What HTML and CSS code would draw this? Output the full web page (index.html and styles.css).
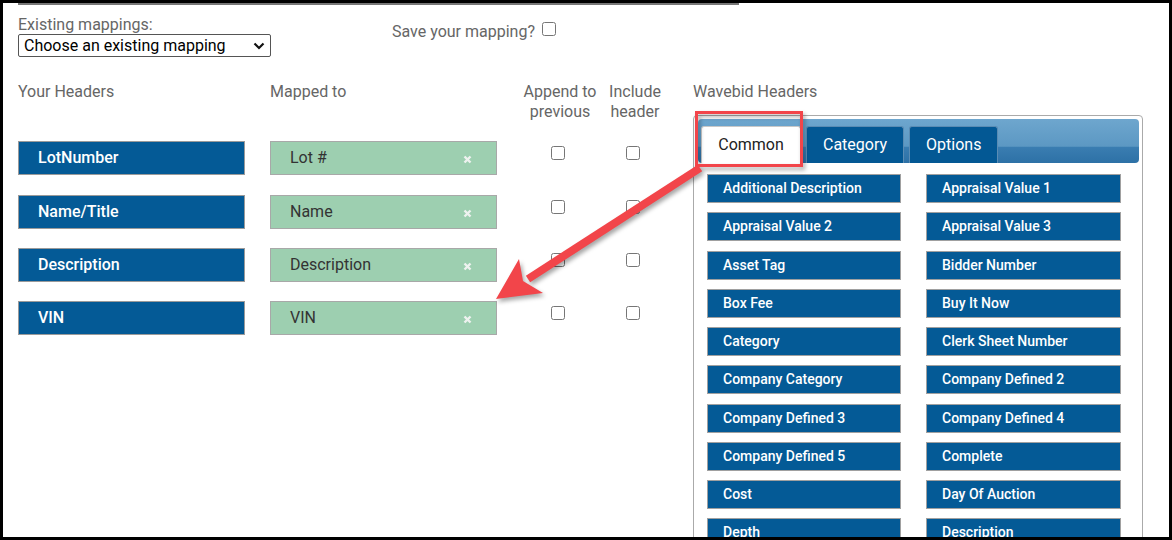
FILE: index.html
```html
<!DOCTYPE html>
<html>
<head>
  <title>Import Mapping</title>
  <meta name="viewport" content="width=device-width, initial-scale=1.0">
  <link rel="stylesheet" href="styles.css">
</head>
<body>
  <div class="frame">
    <div class="topline"></div>

    <div class="options">
      <div class="existing">
        <label for="mapping-select">Existing mappings:</label>
        <div class="select-wrap">
          <select id="mapping-select">
            <option>Choose an existing mapping</option>
          </select>
          <svg class="chevron" width="12" height="8" viewBox="0 0 12 8"><path d="M1.5 1.5 L6 6 L10.5 1.5" fill="none" stroke="#111" stroke-width="2.2"/></svg>
        </div>
      </div>
      <label class="save">Save your mapping? <input type="checkbox"></label>
    </div>

    <div class="workspace">
      <div class="mapper">
        <div class="col-title">Your Headers</div>
        <div class="col-title">Mapped to</div>
        <div class="col-title center">Append to<br>previous</div>
        <div class="col-title center">Include<br>header</div>

        <div class="yours">LotNumber</div>
        <div class="mapped">Lot # <svg class="remove" width="9" height="9" viewBox="0 0 9 9"><path d="M1.5 1.5 L7.5 7.5 M7.5 1.5 L1.5 7.5" stroke="#eef2ef" stroke-width="2.4"/></svg></div>
        <div class="check"><input type="checkbox"></div>
        <div class="check"><input type="checkbox"></div>

        <div class="yours">Name/Title</div>
        <div class="mapped">Name <svg class="remove" width="9" height="9" viewBox="0 0 9 9"><path d="M1.5 1.5 L7.5 7.5 M7.5 1.5 L1.5 7.5" stroke="#eef2ef" stroke-width="2.4"/></svg></div>
        <div class="check"><input type="checkbox"></div>
        <div class="check"><input type="checkbox"></div>

        <div class="yours">Description</div>
        <div class="mapped">Description <svg class="remove" width="9" height="9" viewBox="0 0 9 9"><path d="M1.5 1.5 L7.5 7.5 M7.5 1.5 L1.5 7.5" stroke="#eef2ef" stroke-width="2.4"/></svg></div>
        <div class="check"><input type="checkbox"></div>
        <div class="check"><input type="checkbox"></div>

        <div class="yours">VIN</div>
        <div class="mapped">VIN <svg class="remove" width="9" height="9" viewBox="0 0 9 9"><path d="M1.5 1.5 L7.5 7.5 M7.5 1.5 L1.5 7.5" stroke="#eef2ef" stroke-width="2.4"/></svg></div>
        <div class="check"><input type="checkbox"></div>
        <div class="check"><input type="checkbox"></div>
      </div>

      <div class="wavebid">
        <div class="col-title">Wavebid Headers</div>
        <div class="panel">
          <ul class="tabs">
            <li class="tab active">Common</li>
            <li class="tab">Category</li>
            <li class="tab">Options</li>
          </ul>
          <div class="fields">
            <div class="field">Additional Description</div>
            <div class="field">Appraisal Value 1</div>
            <div class="field">Appraisal Value 2</div>
            <div class="field">Appraisal Value 3</div>
            <div class="field">Asset Tag</div>
            <div class="field">Bidder Number</div>
            <div class="field">Box Fee</div>
            <div class="field">Buy It Now</div>
            <div class="field">Category</div>
            <div class="field">Clerk Sheet Number</div>
            <div class="field">Company Category</div>
            <div class="field">Company Defined 2</div>
            <div class="field">Company Defined 3</div>
            <div class="field">Company Defined 4</div>
            <div class="field">Company Defined 5</div>
            <div class="field">Complete</div>
            <div class="field">Cost</div>
            <div class="field">Day Of Auction</div>
            <div class="field">Depth</div>
            <div class="field">Description</div>
          </div>
        </div>
      </div>
    </div>

    <!-- callout drawn over the screenshot -->
    <svg class="annotation" width="1172" height="540" viewBox="0 0 1172 540">
      <g class="callout">
        <rect x="696.5" y="112.5" width="105" height="53" fill="none" stroke="#f2454a" stroke-width="3"/>
        <line x1="700" y1="168" x2="528" y2="279" stroke="#f2454a" stroke-width="8"/>
        <polygon points="496,299 519,259 523,281 543,293" fill="#f2454a"/>
      </g>
    </svg>
  </div>
</body>
</html>
```

FILE: styles.css
```css
html, body {
  margin: 0;
  padding: 0;
  background: #fff;
}
body {
  font-family: Roboto, "Liberation Sans", sans-serif;
  font-size: 16px;
  color: #666;
}
.frame {
  position: relative;
  width: 1172px;
  height: 540px;
  box-sizing: border-box;
  border: 3px solid #000;
  overflow: hidden;
}
.topline {
  margin-left: 15px;
  width: 721px;
  height: 2px;
  background: #777;
}

/* existing mapping + save */
.options {
  display: flex;
  padding-left: 15px;
  margin-top: 10px;
}
.existing label {
  display: block;
  line-height: 19px;
}
.select-wrap {
  position: relative;
  width: 253px;
}
.select-wrap select {
  appearance: none;
  -webkit-appearance: none;
  width: 253px;
  height: 23px;
  margin: 0;
  padding: 0 0 0 5px;
  border: 1px solid #555;
  border-radius: 2px;
  background: #fff;
  font-family: Roboto, "Liberation Sans", sans-serif;
  font-size: 16px;
  color: #000;
}
.chevron {
  position: absolute;
  right: 6px;
  top: 8px;
}
.save {
  margin-left: 121px;
  margin-top: 7px;
  line-height: 19px;
  display: flex;
  align-items: flex-start;
  gap: 7px;
}
.save input {
  margin: 0;
  width: 14px;
  height: 14px;
}

/* columns */
.workspace {
  display: flex;
  align-items: flex-start;
  padding-left: 15px;
  margin-top: 25px;
}
.col-title {
  line-height: 20px;
}
.center {
  text-align: center;
}
.mapper {
  display: grid;
  grid-template-columns: 252px 250px 80px 70px;
  grid-template-rows: 40px repeat(4, 34px);
  row-gap: 19.33px;
}
.yours, .mapped {
  width: 227px;
  height: 34px;
  box-sizing: border-box;
  padding-left: 19px;
  line-height: 32px;
}
.yours {
  background: #045a96;
  border: 1px solid #9a9a9a;
  color: #fff;
  font-weight: 500;
}
.mapped {
  position: relative;
  background: #9dcfb0;
  border: 1px solid #a8a8a8;
  color: #333;
}
.remove {
  position: absolute;
  right: 24px;
  top: 13px;
}
.check {
  text-align: center;
}
.check input {
  margin: 5px 4px 0 0;
  width: 14px;
  height: 14px;
}

/* wavebid headers */
.wavebid {
  margin-left: 23px;
}
.panel {
  margin-top: 13px;
  width: 450px;
  height: 440px;
  box-sizing: border-box;
  border: 1px solid #aaa;
  border-radius: 4px;
  padding: 3px;
}
.tabs {
  list-style-type: none;
  margin: 0 0 0 1px;
  padding: 7px 0 0 3px;
  height: 44px;
  box-sizing: border-box;
  display: flex;
  gap: 5px;
  border-radius: 4px;
  background: linear-gradient(to bottom, #6ea6ce 0%, #5c98c3 62%, #3a7db1 64%, #2d71a6 100%);
}
.tab {
  height: 37px;
  box-sizing: border-box;
  padding: 0 16px;
  line-height: 35px;
  border: 1px solid #5a8cb4;
  border-bottom: none;
  border-radius: 3px 3px 0 0;
  background: #035894;
  color: #fff;
}
.tab.active {
  width: 100px;
  padding: 0;
  text-align: center;
  background: #fff;
  border-color: #c8c8c8;
  color: #222;
}
.fields {
  display: grid;
  grid-template-columns: 194px 195px;
  grid-auto-rows: 29px;
  column-gap: 25px;
  row-gap: 9.25px;
  padding: 11px 0 0 10px;
}
.field {
  background: #045a96;
  border: 1px solid #a0a0a0;
  box-sizing: border-box;
  padding-left: 15px;
  line-height: 27px;
  color: #fff;
  font-size: 14px;
  font-weight: 500;
  white-space: nowrap;
}

.annotation {
  position: absolute;
  left: -3px;
  top: -3px;
  pointer-events: none;
}
.callout {
  filter: drop-shadow(2px 3px 2px rgba(0,0,0,0.35));
}
```
